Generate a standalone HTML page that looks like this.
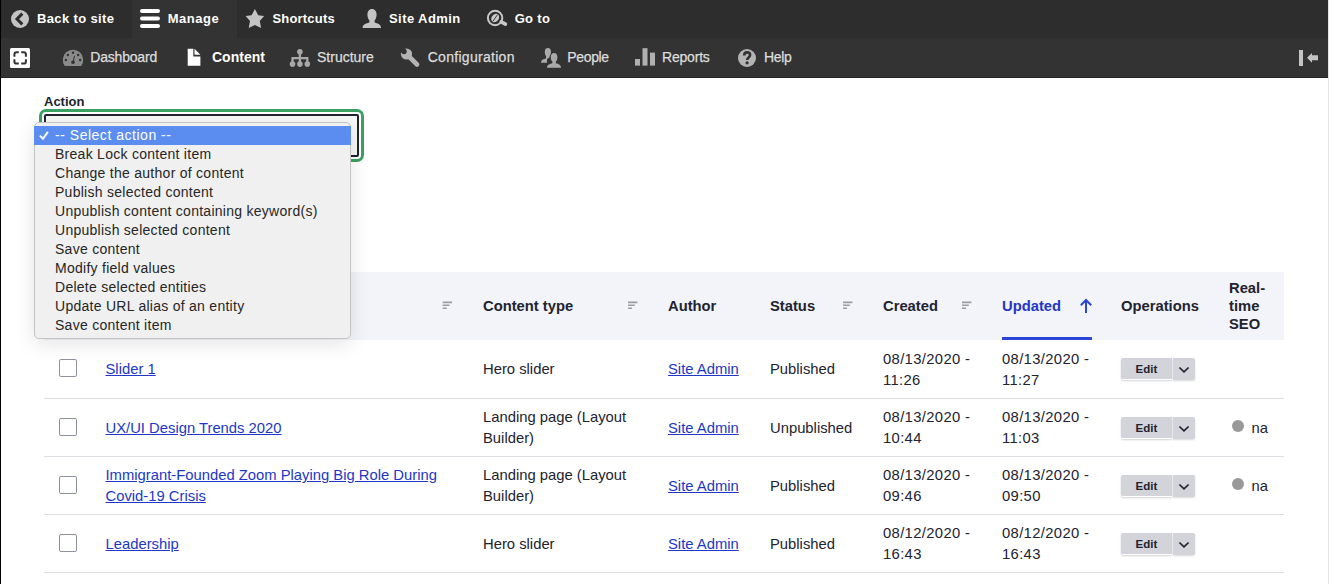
<!DOCTYPE html>
<html><head><meta charset="utf-8">
<style>
*{box-sizing:border-box;margin:0;padding:0}
html,body{width:1332px;height:584px;overflow:hidden;background:#fff}
body{position:relative;font-family:"Liberation Sans",sans-serif;color:#222330}
.a{position:absolute;white-space:nowrap}
#bar1{position:absolute;left:0;top:0;width:1328px;height:38px;background:#2d2d2d}
#bar2{position:absolute;left:0;top:38px;width:1328px;height:40px;background:#333;border-bottom:1px solid #222}
#manage{position:absolute;left:132px;top:0;width:105px;height:38px;background:#333}
.t1{font-weight:bold;font-size:13px;line-height:38px;top:-0.5px;color:#fff}
.t2{font-size:14px;line-height:38px;top:38px;color:#ddd;-webkit-text-stroke:.25px #ddd}
#lb{position:absolute;left:0;top:0;width:1px;height:584px;background:#000}
#rb{position:absolute;left:1328px;top:0;width:1px;height:584px;background:#e6e6e6}
svg{position:absolute;overflow:visible}
</style></head><body>
<div id="bar1"><div id="manage"></div></div>
<div id="bar2"></div>

<!-- top bar icons -->
<svg style="left:0;top:0" width="1" height="1">
  <circle cx="20" cy="19" r="9" fill="#c4c4c4"/>
  <path d="M22.3 13.6 L17 19 L22.3 24.4" stroke="#2d2d2d" stroke-width="3" fill="none"/>
  <rect x="140" y="9" width="20" height="4" rx="2" fill="#fff"/>
  <rect x="140" y="16.5" width="20" height="4" rx="2" fill="#fff"/>
  <rect x="140" y="24" width="20" height="4" rx="2" fill="#fff"/>
  <path d="M254.9 8.9 L258.2 15.2 L264.1 16.1 L259.8 21 L261.1 27.9 L254.9 25 L248.7 27.9 L250 21 L245.6 16.1 L251.6 15.2 Z" fill="#c4c4c4"/>
  <path d="M372 8.9 C375 8.9 376.6 11.5 376.6 14.5 C376.6 17.3 375.5 19.5 374.6 20.5 L374.6 22.5 C377 23.3 381 24 381 27.9 L362.6 27.9 C362.6 24 366.8 23.3 369.4 22.5 L369.4 20.5 C368.5 19.5 367.4 17.3 367.4 14.5 C367.4 11.5 369 8.9 372 8.9 Z" fill="#c4c4c4"/>
  <circle cx="495.1" cy="18" r="7.2" stroke="#c8c8c8" stroke-width="2" fill="none"/>
  <ellipse cx="495.2" cy="18" rx="3.6" ry="4.6" transform="rotate(35 495.2 18)" fill="#c8c8c8"/>
  <path d="M497.6 14.6 L492.8 21.4" stroke="#2d2d2d" stroke-width="0.9"/>
  <path d="M501.2 21.9 L505.4 24.2" stroke="#c8c8c8" stroke-width="3.6" stroke-linecap="round"/>
</svg>
<div class="a t1" style="left:37px;letter-spacing:.36px">Back to site</div>
<div class="a t1" style="left:167.7px;letter-spacing:.55px">Manage</div>
<div class="a t1" style="left:272.4px;letter-spacing:.2px">Shortcuts</div>
<div class="a t1" style="left:389px;letter-spacing:.43px">Site Admin</div>
<div class="a t1" style="left:514.7px;letter-spacing:.3px">Go to</div>

<!-- second bar icons -->
<svg style="left:0;top:0" width="1" height="1">
  <rect x="10" y="48" width="20" height="20" rx="1.5" fill="#fff"/>
  <path d="M14.4 56.8 V54.4 Q14.4 52.2 16.6 52.2 H18.8 M21.2 52.2 H23.7 Q25.9 52.2 25.9 54.4 V56.8 M25.9 59.2 V61.4 Q25.9 63.6 23.7 63.6 H21.2 M18.8 63.6 H16.6 Q14.4 63.6 14.4 61.4 V59.2" stroke="#333" stroke-width="2" fill="none"/>
  <path d="M64.8 66 A10.2 10.2 0 1 1 81.2 66 Z" fill="#8a8a8a"/>
  <circle cx="73" cy="52.8" r="1.25" fill="#333"/>
  <circle cx="67.9" cy="55" r="1.25" fill="#333"/>
  <circle cx="78.1" cy="55" r="1.25" fill="#333"/>
  <circle cx="65.9" cy="60" r="1.25" fill="#333"/>
  <circle cx="80.1" cy="60" r="1.25" fill="#333"/>
  <path d="M74.6 55.8 L73.2 61.5" stroke="#333" stroke-width="1"/>
  <circle cx="73" cy="62.2" r="1.8" fill="#333"/>
  <path d="M187.7 48.8 H193.3 V56.6 H200.4 V65.8 H187.7 Z" fill="#fff"/>
  <path d="M194.5 48.8 L200.4 54.8 H194.5 Z" fill="#fff"/>
  <circle cx="299.9" cy="51.7" r="2.8" fill="#a8a8a8"/>
  <circle cx="292.5" cy="64.1" r="2.8" fill="#a8a8a8"/>
  <circle cx="299.9" cy="64.1" r="2.8" fill="#a8a8a8"/>
  <circle cx="307.3" cy="64.1" r="2.8" fill="#a8a8a8"/>
  <path d="M299.9 52 V64 M292.5 64 V58.2 H307.3 V64" stroke="#a8a8a8" stroke-width="2.3" fill="none"/>
  <circle cx="406.5" cy="54" r="5.6" fill="#b4b4b4"/>
  <circle cx="404" cy="51.5" r="2.7" fill="#333"/>
  <path d="M403.9 51.4 L400.2 47.7" stroke="#333" stroke-width="4.4"/>
  <path d="M408.5 56 L417 64.5" stroke="#b4b4b4" stroke-width="4.6" stroke-linecap="round"/>
  <path d="M547.9 48 C550 48 551 49.6 551 52 C551 53.8 550.3 55.2 549.6 55.9 L549.6 57.2 L547 59 L547 62.7 L541 62.7 C541 60 543.6 59.2 546 58.6 L546 55.9 C545.3 55.2 544.8 53.8 544.8 52 C544.8 49.6 545.8 48 547.9 48 Z" fill="#aaa"/>
  <path d="M554.1 53.1 C556.4 53.1 557.4 54.9 557.4 57.3 C557.4 59.4 556.6 60.9 555.8 61.8 L555.8 63.3 C558.3 64 561 64.7 561 67.7 L547 67.7 C547 64.7 549.9 64 552.4 63.3 L552.4 61.8 C551.6 60.9 550.8 59.4 550.8 57.3 C550.8 54.9 551.8 53.1 554.1 53.1 Z" fill="#aaa"/>
  <rect x="635" y="59" width="5" height="6.6" fill="#b0b0b0"/>
  <rect x="642.5" y="48.2" width="5" height="17.4" fill="#b0b0b0"/>
  <rect x="650" y="52.6" width="5" height="13" fill="#b0b0b0"/>
  <circle cx="747" cy="58" r="9" fill="#b4b4b4"/>
  <path d="M744.2 55.4 C744.2 53.4 745.5 52.4 747.1 52.4 C748.9 52.4 750.1 53.5 750.1 55.1 C750.1 57.3 747.3 57.5 747.3 59.4 L747.3 60" stroke="#333" stroke-width="2.6" fill="none"/>
  <circle cx="747.1" cy="62.8" r="1.6" fill="#333"/>
  <rect x="1299" y="50" width="4" height="16" fill="#c4c4c4"/>
  <path d="M1307 57.8 L1312 53 V55.3 H1318 V60.3 H1312 V62.7 Z" fill="#c4c4c4"/>
</svg>
<div class="a t2" style="left:90.3px;letter-spacing:-.2px">Dashboard</div>
<div class="a t2" style="left:212px;font-weight:bold;color:#fff;-webkit-text-stroke:0">Content</div>
<div class="a t2" style="left:317px">Structure</div>
<div class="a t2" style="left:427.7px;letter-spacing:.29px">Configuration</div>
<div class="a t2" style="left:567.3px;letter-spacing:-.36px">People</div>
<div class="a t2" style="left:662px;letter-spacing:-.2px">Reports</div>
<div class="a t2" style="left:764px;letter-spacing:-.37px">Help</div>

<div id="lb"></div>
<div id="rb"></div>

<style>
.lbl{font-weight:bold;font-size:13px;line-height:16px;color:#222330}
#ring{position:absolute;left:39px;top:109px;width:325px;height:53px;border:3px solid #3aa262;border-radius:7px}
#sel{position:absolute;left:44px;top:114px;width:315px;height:43px;border:2px solid #222330;border-radius:2px;background:#f7f7f8}
#menu{position:absolute;z-index:10;left:34px;top:122px;width:316.5px;height:217px;background:#f0f0f0;border:1px solid #c4c4c4;border-radius:5px;box-shadow:0 5px 20px rgba(0,0,0,.11);}
#hl{position:absolute;left:-1px;top:3px;width:calc(100% + 2px);height:19px;background:#5a8def}
.opt{position:absolute;left:20px;font-size:14px;line-height:19px;letter-spacing:.27px;color:#262626;margin-top:-.4px}
#thead{position:absolute;left:44px;top:272px;width:1240px;height:68px;background:#f3f4f9}
.th{font-weight:bold;font-size:14.75px;line-height:18px;color:#222330}
.td{font-size:14.8px;line-height:20.7px;color:#222330}
.lk{color:#2237c8;text-decoration:underline}
.hr{position:absolute;left:44px;width:1240px;height:1px;background:#dcdde2}
.cb{position:absolute;left:59px;width:18px;height:18px;border:1px solid #8e929c;border-radius:2px;background:#fff}
.eb{position:absolute;left:1121px;width:74px;height:22px}
.eb .e{position:absolute;left:0;top:0;width:51px;height:22px;background:#d3d4d9;border-radius:2px 0 0 2px;border-bottom:1px solid #fff;box-shadow:0 1px 2px rgba(0,0,0,.18)}
.eb .d{position:absolute;left:52px;top:0;width:22px;height:22px;background:#d3d4d9;border-radius:0 2px 2px 0;box-shadow:0 1px 2px rgba(0,0,0,.15)}
.eb .e span{position:absolute;left:14.5px;top:1px;font-weight:bold;font-size:11.5px;line-height:21px;color:#222330}
.dot{position:absolute;left:1232px;width:12px;height:12px;border-radius:50%;background:#999}
</style>
<div class="a lbl" style="left:44px;top:94px">Action</div>
<div id="ring"></div>
<div id="sel"></div>
<div id="menu">
  <div id="hl"></div>
  <svg style="left:0;top:0" width="1" height="1"><path d="M4.8 12.6 L8 15.8 L12.9 8.9" stroke="#fff" stroke-width="2" fill="none"/></svg>
  <div class="opt" style="top:3px;color:#fff;letter-spacing:.52px">-- Select action --</div>
  <div class="opt" style="top:22px">Break Lock content item</div>
  <div class="opt" style="top:41px">Change the author of content</div>
  <div class="opt" style="top:60px">Publish selected content</div>
  <div class="opt" style="top:79px">Unpublish content containing keyword(s)</div>
  <div class="opt" style="top:98px">Unpublish selected content</div>
  <div class="opt" style="top:117px">Save content</div>
  <div class="opt" style="top:136px">Modify field values</div>
  <div class="opt" style="top:155px">Delete selected entities</div>
  <div class="opt" style="top:174px">Update URL alias of an entity</div>
  <div class="opt" style="top:193px">Save content item</div>
</div>

<div id="thead"></div>
<svg style="left:0;top:0" width="1" height="1"><path d="M442.7 302.4h9.4M442.7 305.3h6.8M442.7 308.2h4" stroke="#9a9ca6" stroke-width="1.6"/><path d="M628.0 302.4h9.4M628.0 305.3h6.8M628.0 308.2h4" stroke="#9a9ca6" stroke-width="1.6"/><path d="M843.0 302.4h9.4M843.0 305.3h6.8M843.0 308.2h4" stroke="#9a9ca6" stroke-width="1.6"/><path d="M962.0 302.4h9.4M962.0 305.3h6.8M962.0 308.2h4" stroke="#9a9ca6" stroke-width="1.6"/>
<path d="M1086 313 V300.5 M1080.8 305.3 L1086 300 L1091.2 305.3" stroke="#2a46d6" stroke-width="2" fill="none"/>
<rect x="1002" y="337" width="90" height="3" fill="#2a46d6"/>
</svg>
<div class="a th" style="left:483px;top:297px">Content type</div>
<div class="a th" style="left:668px;top:297px">Author</div>
<div class="a th" style="left:770px;top:297px">Status</div>
<div class="a th" style="left:883px;top:297px">Created</div>
<div class="a th" style="left:1002px;top:297px;color:#2237c8">Updated</div>
<div class="a th" style="left:1121px;top:297px">Operations</div>
<div class="a th" style="left:1229px;top:279px">Real-<br>time<br>SEO</div>
<div class="hr" style="top:398px"></div>
<div class="hr" style="top:456px"></div>
<div class="hr" style="top:514px"></div>
<div class="hr" style="top:572px"></div>
<div class="cb" style="top:359px"></div>
<div class="a td" style="left:105.5px;top:358.65px"><span class="lk">Slider 1</span></div>
<div class="a td" style="left:483px;top:358.65px">Hero slider</div>
<div class="a td" style="left:668px;top:358.65px"><span class="lk">Site Admin</span></div>
<div class="a td" style="left:770px;top:358.65px">Published</div>
<div class="a td" style="letter-spacing:.35px;left:883px;top:349.3px">08/13/2020 -<br>11:26</div>
<div class="a td" style="letter-spacing:.35px;left:1002px;top:349.3px">08/13/2020 -<br>11:27</div>
<div class="eb" style="top:358px"><div class="e"><span>Edit</span></div><div class="d"><svg style="left:0;top:0" width="1" height="1"><path d="M6.4 9.5 L11 13.9 L15.6 9.5" stroke="#222330" stroke-width="1.7" fill="none"/></svg></div></div>
<div class="cb" style="top:418px"></div>
<div class="a td" style="left:105.5px;top:417.65px"><span class="lk">UX/UI Design Trends 2020</span></div>
<div class="a td" style="left:483px;top:407.3px">Landing page (Layout<br>Builder)</div>
<div class="a td" style="left:668px;top:417.65px"><span class="lk">Site Admin</span></div>
<div class="a td" style="left:770px;top:417.65px">Unpublished</div>
<div class="a td" style="letter-spacing:.35px;left:883px;top:407.3px">08/13/2020 -<br>10:44</div>
<div class="a td" style="letter-spacing:.35px;left:1002px;top:407.3px">08/13/2020 -<br>11:03</div>
<div class="eb" style="top:417px"><div class="e"><span>Edit</span></div><div class="d"><svg style="left:0;top:0" width="1" height="1"><path d="M6.4 9.5 L11 13.9 L15.6 9.5" stroke="#222330" stroke-width="1.7" fill="none"/></svg></div></div>
<div class="dot" style="top:420px"></div><div class="a td" style="left:1251.5px;top:417.65px">na</div>
<div class="cb" style="top:476px"></div>
<div class="a td" style="left:105.5px;top:465.3px"><span class="lk">Immigrant-Founded Zoom Playing Big Role During</span><br><span class="lk">Covid-19 Crisis</span></div>
<div class="a td" style="left:483px;top:465.3px">Landing page (Layout<br>Builder)</div>
<div class="a td" style="left:668px;top:475.65px"><span class="lk">Site Admin</span></div>
<div class="a td" style="left:770px;top:475.65px">Published</div>
<div class="a td" style="letter-spacing:.35px;left:883px;top:465.3px">08/13/2020 -<br>09:46</div>
<div class="a td" style="letter-spacing:.35px;left:1002px;top:465.3px">08/13/2020 -<br>09:50</div>
<div class="eb" style="top:475px"><div class="e"><span>Edit</span></div><div class="d"><svg style="left:0;top:0" width="1" height="1"><path d="M6.4 9.5 L11 13.9 L15.6 9.5" stroke="#222330" stroke-width="1.7" fill="none"/></svg></div></div>
<div class="dot" style="top:478px"></div><div class="a td" style="left:1251.5px;top:475.65px">na</div>
<div class="cb" style="top:534px"></div>
<div class="a td" style="left:105.5px;top:533.65px"><span class="lk">Leadership</span></div>
<div class="a td" style="left:483px;top:533.65px">Hero slider</div>
<div class="a td" style="left:668px;top:533.65px"><span class="lk">Site Admin</span></div>
<div class="a td" style="left:770px;top:533.65px">Published</div>
<div class="a td" style="letter-spacing:.35px;left:883px;top:523.3px">08/12/2020 -<br>16:43</div>
<div class="a td" style="letter-spacing:.35px;left:1002px;top:523.3px">08/12/2020 -<br>16:43</div>
<div class="eb" style="top:533px"><div class="e"><span>Edit</span></div><div class="d"><svg style="left:0;top:0" width="1" height="1"><path d="M6.4 9.5 L11 13.9 L15.6 9.5" stroke="#222330" stroke-width="1.7" fill="none"/></svg></div></div>
</body></html>
